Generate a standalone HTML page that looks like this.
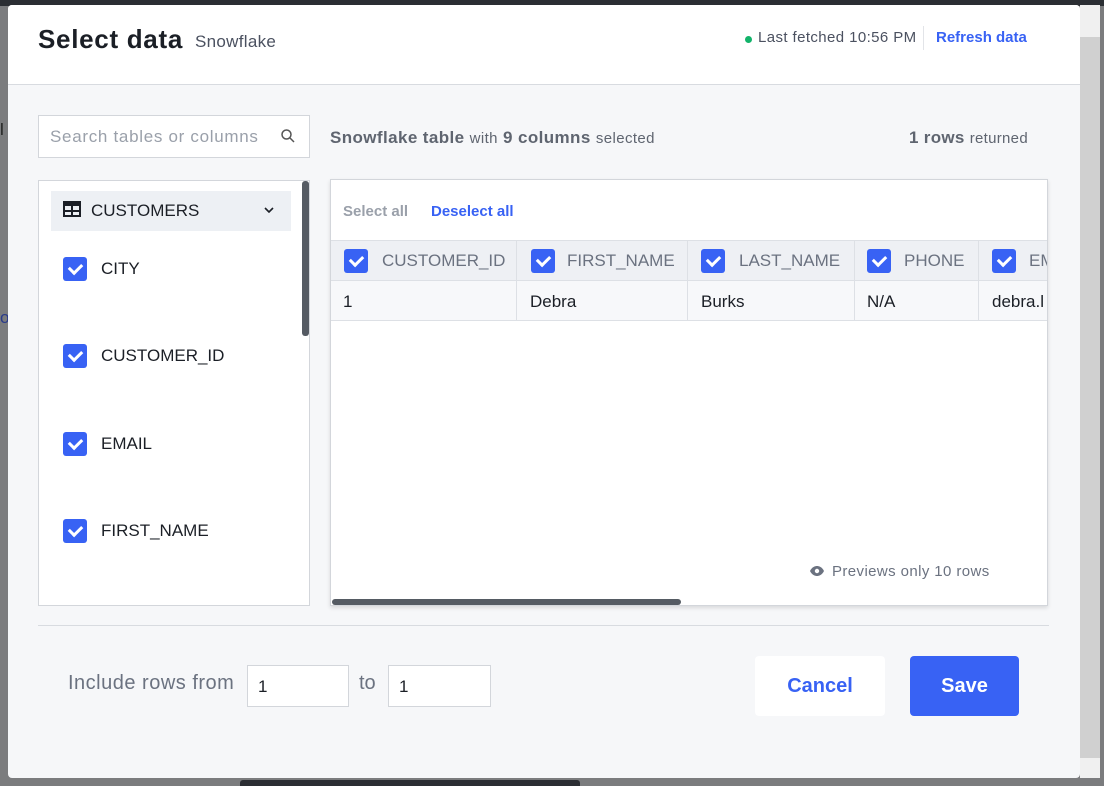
<!DOCTYPE html>
<html><head><style>
*{box-sizing:border-box;margin:0;padding:0}
body{width:1104px;height:786px;overflow:hidden;background:#7b7c7e;font-family:"Liberation Sans",sans-serif;position:relative}
.topbar{position:absolute;left:0;top:0;width:1104px;height:6px;background:#2b2e33}
.modal{position:absolute;left:8px;top:5px;width:1072px;height:773px;background:#f6f7f9;border-radius:4px;overflow:hidden}
.hdr{position:absolute;left:0;top:0;width:1072px;height:80px;background:#fff;border-bottom:1px solid #d8dbe0}
.sb{position:absolute;left:1080px;top:5px;width:20px;height:773px;background:#d0d0d0}
.sb .t{position:absolute;left:0;top:0;width:20px;height:32px;background:#f0f0f0}
.abs{position:absolute}
.cb{position:absolute;width:24px;height:24px;background:#3862f4;border-radius:3px}
.cb:after{content:"";position:absolute;width:10px;height:6px;border-left:3px solid #fff;border-bottom:3px solid #fff;transform:rotate(-45deg);top:6px;left:6px}
.item{position:absolute;font-size:17px;color:#1b1f26}
</style></head><body>
<div class="topbar"></div>
<div class="abs" style="left:0;top:120px;font-size:17px;color:#222">l</div>
<div class="abs" style="left:0;top:308px;font-size:17px;color:#2a3a8a">o</div>
<div class="modal">
 <div class="hdr">
  <div class="abs" style="left:30px;top:19px;font-size:26px;font-weight:bold;color:#1b1f26;letter-spacing:0.7px">Select data</div>
  <div class="abs" style="left:187px;top:27px;font-size:17px;color:#4b5160;letter-spacing:0.3px">Snowflake</div>
  <div class="abs" style="left:737px;top:31px;width:7px;height:7px;border-radius:50%;background:#12b36a"></div>
  <div class="abs" style="left:750px;top:24px;font-size:15px;color:#4b5160;letter-spacing:0.4px">Last fetched 10:56 PM</div>
  <div class="abs" style="left:915px;top:21px;width:1px;height:24px;background:#e2e4e8"></div>
  <div class="abs" style="left:928px;top:24px;font-size:15px;font-weight:bold;color:#3862f4">Refresh data</div>
 </div>
 <div class="abs" style="left:30px;top:110px;width:272px;height:43px;background:#fff;border:1px solid #d3d6db"></div>
 <div class="abs" style="left:42px;top:122px;font-size:17px;color:#9aa0aa;letter-spacing:0.7px">Search tables or columns</div>
 <svg class="abs" style="left:272px;top:123px" width="16" height="16" viewBox="0 0 16 16"><circle cx="6.5" cy="6.5" r="4.5" fill="none" stroke="#555" stroke-width="1.5"/><line x1="10" y1="10" x2="14" y2="14" stroke="#555" stroke-width="1.5"/></svg>
 <div class="abs" style="left:322px;top:123px;font-size:17px;color:#5f6570;letter-spacing:0.4px"><b>Snowflake table</b> <span style="font-size:15px">with</span> <b>9 columns</b> <span style="font-size:15px">selected</span></div>
 <div class="abs" style="left:901px;top:123px;font-size:17px;color:#5f6570;letter-spacing:0.3px"><b>1 rows</b> <span style="font-size:15px">returned</span></div>
 <div class="abs" style="left:30px;top:175px;width:272px;height:426px;background:#fff;border:1px solid #d3d6db"></div>
 <div class="abs" style="left:294px;top:176px;width:7px;height:155px;background:#555b63;border-radius:3px"></div>
 <div class="abs" style="left:43px;top:186px;width:240px;height:40px;background:#edf0f4"></div>
 <svg class="abs" style="left:55px;top:196px" width="18" height="16" viewBox="0 0 18 16"><rect x="1" y="1" width="16" height="14" fill="none" stroke="#1b1f26" stroke-width="2"/><rect x="1" y="1" width="16" height="4" fill="#1b1f26"/><line x1="9" y1="5" x2="9" y2="15" stroke="#1b1f26" stroke-width="2"/><line x1="1" y1="10" x2="17" y2="10" stroke="#1b1f26" stroke-width="2"/></svg>
 <div class="item" style="left:83px;top:196px">CUSTOMERS</div>
 <svg class="abs" style="left:256px;top:202px" width="10" height="6" viewBox="0 0 10 6"><path d="M1 1l4 4 4-4" fill="none" stroke="#1b1f26" stroke-width="1.6"/></svg>
 <div class="cb" style="left:55px;top:252px"></div><div class="item" style="left:93px;top:254px">CITY</div>
 <div class="cb" style="left:55px;top:339px"></div><div class="item" style="left:93px;top:341px">CUSTOMER_ID</div>
 <div class="cb" style="left:55px;top:427px"></div><div class="item" style="left:93px;top:429px">EMAIL</div>
 <div class="cb" style="left:55px;top:514px"></div><div class="item" style="left:93px;top:516px">FIRST_NAME</div>
 <div class="abs" style="left:322px;top:174px;width:718px;height:427px;background:#fff;border:1px solid #d3d6db;box-shadow:0 2px 4px rgba(0,0,0,.12);overflow:hidden">
  <div class="abs" style="left:12px;top:23px;font-size:15px;font-weight:bold;color:#9aa0aa">Select all</div>
  <div class="abs" style="left:100px;top:23px;font-size:15px;font-weight:bold;color:#3862f4">Deselect all</div>
  <div class="abs" style="left:0;top:60px;width:718px;height:1px;background:#dde0e5"></div>
  <div class="abs" style="left:0;top:61px;width:718px;height:39px;background:#eef0f4"></div>
  <div class="abs" style="left:0;top:100px;width:718px;height:1px;background:#dde0e5"></div>
  <div class="abs" style="left:0;top:101px;width:718px;height:39px;background:#f7f8fa"></div>
  <div class="abs" style="left:0;top:140px;width:718px;height:1px;background:#dde0e5"></div>
  <div class="abs" style="left:185px;top:61px;width:1px;height:79px;background:#dde0e5"></div>
  <div class="abs" style="left:356px;top:61px;width:1px;height:79px;background:#dde0e5"></div>
  <div class="abs" style="left:523px;top:61px;width:1px;height:79px;background:#dde0e5"></div>
  <div class="abs" style="left:647px;top:61px;width:1px;height:79px;background:#dde0e5"></div>
  <div class="cb" style="left:13px;top:69px"></div><div class="abs" style="left:51px;top:71px;font-size:17px;color:#6b7280">CUSTOMER_ID</div>
  <div class="cb" style="left:200px;top:69px"></div><div class="abs" style="left:236px;top:71px;font-size:17px;color:#6b7280">FIRST_NAME</div>
  <div class="cb" style="left:370px;top:69px"></div><div class="abs" style="left:408px;top:71px;font-size:17px;color:#6b7280">LAST_NAME</div>
  <div class="cb" style="left:536px;top:69px"></div><div class="abs" style="left:573px;top:71px;font-size:17px;color:#6b7280">PHONE</div>
  <div class="cb" style="left:661px;top:69px"></div><div class="abs" style="left:698px;top:71px;font-size:17px;color:#6b7280">EM</div>
  <div class="abs" style="left:12px;top:112px;font-size:17px;color:#1b1f26">1</div>
  <div class="abs" style="left:199px;top:112px;font-size:17px;color:#1b1f26">Debra</div>
  <div class="abs" style="left:370px;top:112px;font-size:17px;color:#1b1f26">Burks</div>
  <div class="abs" style="left:536px;top:112px;font-size:17px;color:#1b1f26">N/A</div>
  <div class="abs" style="left:661px;top:112px;font-size:17px;color:#1b1f26">debra.l</div>
  <svg class="abs" style="left:478px;top:385px" width="16" height="12" viewBox="0 0 16 12"><path d="M1 6C3 2 6 1 8 1s5 1 7 5c-2 4-5 5-7 5S3 10 1 6z" fill="#6b7280"/><circle cx="8" cy="6" r="2.2" fill="#fff"/></svg>
  <div class="abs" style="left:501px;top:383px;font-size:15px;color:#6b7280;letter-spacing:0.4px">Previews only 10 rows</div>
  <div class="abs" style="left:1px;top:419px;width:349px;height:6px;background:#555b63;border-radius:3px"></div>
 </div>
 <div class="abs" style="left:30px;top:620px;width:1011px;height:1px;background:#d8dbe0"></div>
 <div class="abs" style="left:60px;top:667px;font-size:20px;color:#6b7280;letter-spacing:0.5px">Include rows from</div>
 <div class="abs" style="left:239px;top:660px;width:102px;height:42px;background:#fff;border:1px solid #d3d6db;font-size:17px;padding:11px 10px;color:#1b1f26">1</div>
 <div class="abs" style="left:351px;top:667px;font-size:20px;color:#6b7280">to</div>
 <div class="abs" style="left:380px;top:660px;width:103px;height:42px;background:#fff;border:1px solid #d3d6db;font-size:17px;padding:11px 10px;color:#1b1f26">1</div>
 <div class="abs" style="left:747px;top:651px;width:130px;height:60px;background:#fff;border-radius:4px;text-align:center;line-height:60px;font-size:20px;font-weight:bold;color:#3862f4">Cancel</div>
 <div class="abs" style="left:902px;top:651px;width:109px;height:60px;background:#3862f4;border-radius:4px;text-align:center;line-height:60px;font-size:20px;font-weight:bold;color:#fff">Save</div>
</div>
<div class="sb"><div class="t"></div><div class="abs" style="left:0;bottom:0;width:20px;height:20px;background:#f0f0f0"></div></div>
<div class="abs" style="left:240px;top:780px;width:340px;height:6px;background:#2b2e33;border-radius:3px 3px 0 0"></div>
</body></html>
